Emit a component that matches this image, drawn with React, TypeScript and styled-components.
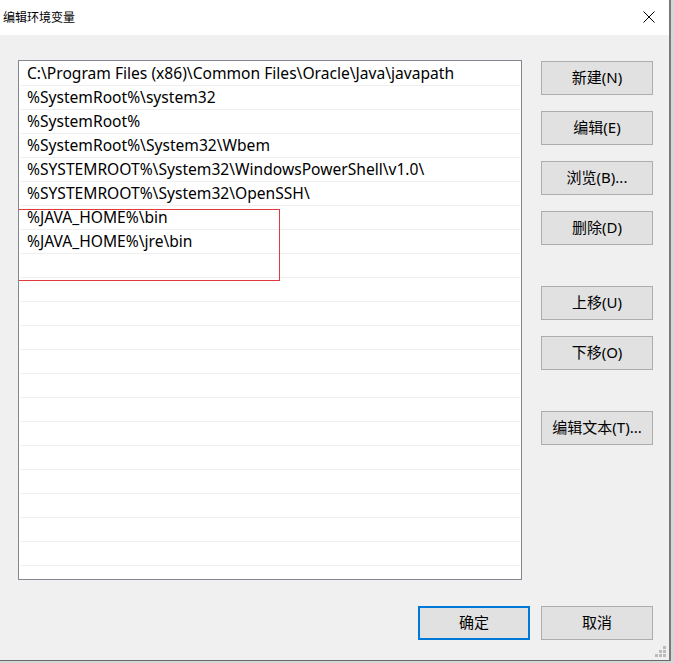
import { FunctionComponent } from 'react'
import { createGlobalStyle, styled } from 'styled-components'

const FONT = `'Noto Sans', 'Noto Sans CJK SC', sans-serif`
const CJK = `'Noto Sans CJK SC', 'Noto Sans', sans-serif`

const GlobalStyle = createGlobalStyle`
  html, body {
    margin: 0;
    padding: 0;
    background: #d6d6d6;
    overflow: hidden;
  }
`

const Dialog = styled.div`
  position: relative;
  width: 669px;
  height: 660px;
  border-right: 2px solid #7a7a7a;
  border-bottom: 1px solid #6a6a6a;
  background: #f0f0f0;
  display: flex;
  flex-direction: column;
  font-family: ${FONT};
  color: #000;
`

const TitleBar = styled.div`
  height: 35px;
  background: #fff;
  display: flex;
  align-items: center;
  justify-content: space-between;
  padding: 0 14px 2px 3px;
  box-sizing: border-box;
`

const Title = styled.span`
  font-family: ${CJK};
  font-size: 12px;
`

const CloseIcon = () => (
  <svg width="12" height="12" viewBox="0 0 12 12">
    <path d="M0.5 0.5 L11.5 11.5 M11.5 0.5 L0.5 11.5" stroke="#000" strokeWidth="1" />
  </svg>
)

const Body = styled.div`
  flex: 1;
  display: flex;
  flex-direction: column;
  padding: 25px 16px 0 18px;
`

const Main = styled.div`
  display: flex;
  gap: 19px;
`

const ListBox = styled.div`
  position: relative;
  width: 504px;
  height: 520px;
  box-sizing: border-box;
  border: 1px solid #828790;
  background: #fff;
  padding: 1px 1px 0 1px;
  overflow: hidden;
`

const Row = styled.div`
  height: 23px;
  border-bottom: 1px solid #efefef;
  padding-left: 7px;
  font-size: 15.6px;
  line-height: 23px;
  white-space: nowrap;
`

const Highlight = styled.div`
  position: absolute;
  left: -1px;
  top: 148px;
  width: 262px;
  height: 72px;
  box-sizing: border-box;
  border: 1px solid #e0393e;
  pointer-events: none;
`

const ButtonColumn = styled.div`
  display: flex;
  flex-direction: column;
  padding-top: 1px;
`

const Button = styled.button<{ $gap?: number; $primary?: boolean }>`
  width: 112px;
  height: 34px;
  margin-top: ${(p) => p.$gap ?? 0}px;
  box-sizing: border-box;
  background: #e1e1e1;
  border: ${(p) => (p.$primary ? '2px solid #0078d7' : '1px solid #adadad')};
  font-family: ${FONT};
  font-size: 15px;
  color: #000;
  padding: 0 0 3px 0;
`

const Footer = styled.div`
  display: flex;
  justify-content: flex-end;
  gap: 11px;
  margin-top: 26px;
`

const Grip = styled.svg`
  position: absolute;
  right: 2px;
  bottom: 2px;
`

const entries = [
  'C:\\Program Files (x86)\\Common Files\\Oracle\\Java\\javapath',
  '%SystemRoot%\\system32',
  '%SystemRoot%',
  '%SystemRoot%\\System32\\Wbem',
  '%SYSTEMROOT%\\System32\\WindowsPowerShell\\v1.0\\',
  '%SYSTEMROOT%\\System32\\OpenSSH\\',
  '%JAVA_HOME%\\bin',
  '%JAVA_HOME%\\jre\\bin',
]

const rows = [...entries, ...Array(15).fill('')]

const App: FunctionComponent = () => {
  return (
    <>
      <GlobalStyle />
      <Dialog>
        <TitleBar>
          <Title>编辑环境变量</Title>
          <CloseIcon />
        </TitleBar>
        <Body>
          <Main>
            <ListBox>
              {rows.map((text, i) => (
                <Row key={i}>{text}</Row>
              ))}
              <Highlight />
            </ListBox>
            <ButtonColumn>
              <Button>新建(N)</Button>
              <Button $gap={16}>编辑(E)</Button>
              <Button $gap={16}>浏览(B)...</Button>
              <Button $gap={16}>删除(D)</Button>
              <Button $gap={41}>上移(U)</Button>
              <Button $gap={16}>下移(O)</Button>
              <Button $gap={41}>编辑文本(T)...</Button>
            </ButtonColumn>
          </Main>
          <Footer>
            <Button $primary>确定</Button>
            <Button>取消</Button>
          </Footer>
        </Body>
        <Grip width="12" height="12" viewBox="0 0 12 12">
          <g fill="#bcbcbc">
            <rect x="8" y="0" width="3" height="3" />
            <rect x="4" y="4" width="3" height="3" />
            <rect x="8" y="4" width="3" height="3" />
            <rect x="0" y="8" width="3" height="3" />
            <rect x="4" y="8" width="3" height="3" />
            <rect x="8" y="8" width="3" height="3" />
          </g>
        </Grip>
      </Dialog>
    </>
  )
}

export default App
